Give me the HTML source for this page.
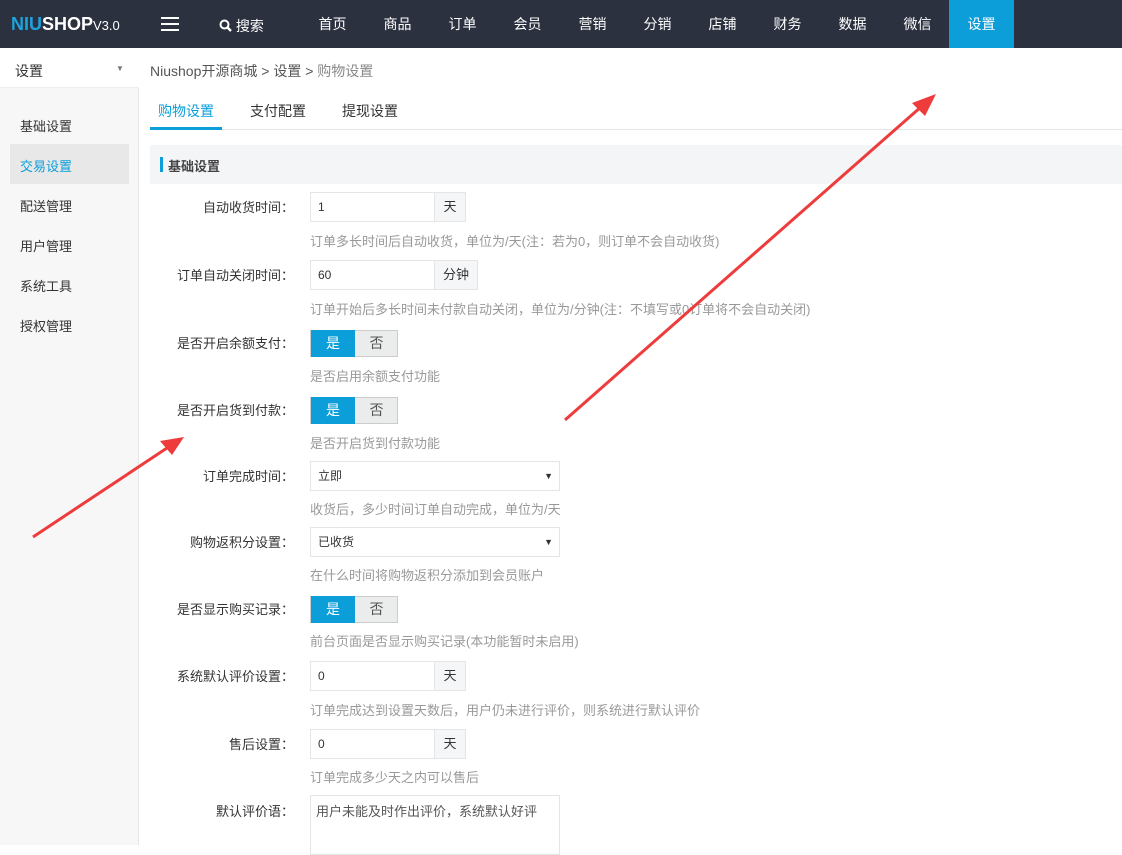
<!DOCTYPE html><html><head><meta charset="utf-8"><style>
*{margin:0;padding:0;box-sizing:border-box}
body{width:1122px;height:845px;overflow:hidden;position:relative;background:#fff;font-family:"Liberation Sans","Noto Sans CJK SC",sans-serif;font-size:13px;color:#333}
.a{position:absolute}
.top{left:0;top:0;width:1122px;height:48px;background:#2c3140}
.nav{top:0;height:48px;line-height:48px;color:#fff;font-size:14px;width:65px;text-align:center}
.side{left:0;top:48px;width:139px;height:797px;background:#f7f7f7;border-right:1px solid #e5e5e5}
.si{left:20px;font-size:13px;color:#333}
.lbl{right:828px;font-size:13px;color:#333;text-align:right;white-space:nowrap}
.lbl:after{content:"：";font-family:"Noto Sans CJK SC",sans-serif}
.help{left:310px;font-size:13px;color:#999;white-space:nowrap}
.inp{left:310px;width:125px;height:30px;border:1px solid #e5e5e5;padding-left:7px;line-height:28px;font-size:12px}
.add{left:434px;width:32px;height:30px;border:1px solid #e5e5e5;background:#f5f6f7;text-align:center;line-height:28px;font-size:13px}
.sw{left:310px;width:88px;height:27px;border:1px solid #ccc;background:#ebeded}
.sw b{position:absolute;left:0;top:-1px;width:44px;height:27px;background:#0b9ed9;color:#fff;font-weight:normal;text-align:center;line-height:27px;font-size:14px}
.sw i{position:absolute;left:44px;top:0;width:43px;text-align:center;line-height:25px;font-style:normal;font-size:14px;color:#555}
.sel{left:310px;width:250px;height:30px;border:1px solid #e5e5e5;padding-left:7px;line-height:28px;font-size:12px}
.sel:after{content:"▼";position:absolute;right:6px;top:0;font-size:9px}
</style></head><body>
<div class="a top"></div>
<div class="a" style="left:11px;top:14px;font-size:18px;font-weight:bold;color:#fff;letter-spacing:0"><span style="color:#1ea2dc">NIU</span>SHOP<span style="font-size:13px;font-weight:normal">V3.0</span></div>
<div class="a" style="left:161px;top:17px;width:18px;height:2px;background:#fff;box-shadow:0 6px 0 #fff,0 12px 0 #fff"></div>
<div class="a" style="left:219px;top:16px;color:#fff;font-size:14px"><svg width="13" height="13" viewBox="0 0 13 13" style="vertical-align:-1px"><circle cx="5.5" cy="5.5" r="4" fill="none" stroke="#fff" stroke-width="2"/><path d="M8.5 8.5L12 12" stroke="#fff" stroke-width="2.4"/></svg> 搜索</div>
<div class="a nav" style="left:300px">首页</div><div class="a nav" style="left:365px">商品</div><div class="a nav" style="left:430px">订单</div><div class="a nav" style="left:495px">会员</div><div class="a nav" style="left:560px">营销</div><div class="a nav" style="left:625px">分销</div><div class="a nav" style="left:690px">店铺</div><div class="a nav" style="left:755px">财务</div><div class="a nav" style="left:820px">数据</div><div class="a nav" style="left:885px">微信</div><div class="a nav" style="left:949px;background:#0b9ed9">设置</div>
<div class="a side"></div>
<div class="a" style="left:0;top:48px;width:139px;height:40px;background:#fff;border-bottom:1px solid #eee"></div>
<div class="a" style="left:15px;top:61px;font-size:14px">设置</div>
<div class="a" style="left:116px;top:64px;font-size:8px;color:#777">▼</div>
<div class="a si" style="top:116px">基础设置</div>
<div class="a" style="left:10px;top:144px;width:119px;height:40px;background:#e8e8e8"></div>
<div class="a si" style="top:156px;color:#0b9ed9">交易设置</div>
<div class="a si" style="top:196px">配送管理</div>
<div class="a si" style="top:236px">用户管理</div>
<div class="a si" style="top:276px">系统工具</div>
<div class="a si" style="top:316px">授权管理</div>
<div class="a" style="left:150px;top:61px;font-size:14px;color:#555">Niushop开源商城 &gt; 设置 &gt; <span style="color:#888">购物设置</span></div>
<div class="a" style="left:150px;top:129px;width:972px;height:1px;background:#e5e5e5"></div>
<div class="a" style="left:150px;top:127px;width:72px;height:3px;background:#0b9ed9"></div>
<div class="a" style="left:158px;top:101px;font-size:14px;color:#0b9ed9">购物设置</div>
<div class="a" style="left:250px;top:101px;font-size:14px">支付配置</div>
<div class="a" style="left:342px;top:101px;font-size:14px">提现设置</div>
<div class="a" style="left:150px;top:145px;width:972px;height:39px;background:#f4f5f7"></div>
<div class="a" style="left:160px;top:157px;width:3px;height:15px;background:#0b9ed9"></div>
<div class="a" style="left:168px;top:156px;font-size:13px;font-weight:bold;color:#444">基础设置</div>

<div class="a lbl" style="top:197px">自动收货时间</div>
<div class="a inp" style="top:192px">1</div><div class="a add" style="top:192px">天</div>
<div class="a help" style="top:231px">订单多长时间后自动收货，单位为/天(注：若为0，则订单不会自动收货)</div>
<div class="a lbl" style="top:265px">订单自动关闭时间</div>
<div class="a inp" style="top:260px">60</div><div class="a add" style="top:260px;width:44px">分钟</div>
<div class="a help" style="top:299px">订单开始后多长时间未付款自动关闭，单位为/分钟(注：不填写或0订单将不会自动关闭)</div>
<div class="a lbl" style="top:333px">是否开启余额支付</div>
<div class="a sw" style="top:330px"><b>是</b><i>否</i></div>
<div class="a help" style="top:366px">是否启用余额支付功能</div>
<div class="a lbl" style="top:400px">是否开启货到付款</div>
<div class="a sw" style="top:397px"><b>是</b><i>否</i></div>
<div class="a help" style="top:433px">是否开启货到付款功能</div>
<div class="a lbl" style="top:466px">订单完成时间</div>
<div class="a sel" style="top:461px">立即</div>
<div class="a help" style="top:499px">收货后，多少时间订单自动完成，单位为/天</div>
<div class="a lbl" style="top:532px">购物返积分设置</div>
<div class="a sel" style="top:527px">已收货</div>
<div class="a help" style="top:565px">在什么时间将购物返积分添加到会员账户</div>
<div class="a lbl" style="top:599px">是否显示购买记录</div>
<div class="a sw" style="top:596px"><b>是</b><i>否</i></div>
<div class="a help" style="top:631px">前台页面是否显示购买记录(本功能暂时未启用)</div>
<div class="a lbl" style="top:666px">系统默认评价设置</div>
<div class="a inp" style="top:661px">0</div><div class="a add" style="top:661px">天</div>
<div class="a help" style="top:700px">订单完成达到设置天数后，用户仍未进行评价，则系统进行默认评价</div>
<div class="a lbl" style="top:734px">售后设置</div>
<div class="a inp" style="top:729px">0</div><div class="a add" style="top:729px">天</div>
<div class="a help" style="top:767px">订单完成多少天之内可以售后</div>
<div class="a lbl" style="top:801px">默认评价语</div>
<div class="a" style="left:310px;top:795px;width:250px;height:60px;border:1px solid #e5e5e5;padding:5px;font-size:13px;color:#555">用户未能及时作出评价，系统默认好评</div>

<svg class="a" style="left:0;top:0" width="1122" height="845">
<path d="M33 537L170 446" stroke="#ee3b3b" stroke-width="3"/>
<path d="M184 437L160 441L172 455Z" fill="#ee3b3b"/>
<path d="M565 420L922 106" stroke="#ee3b3b" stroke-width="3"/>
<path d="M936 94L912 103L925 116Z" fill="#ee3b3b"/>
</svg>
</body></html>
